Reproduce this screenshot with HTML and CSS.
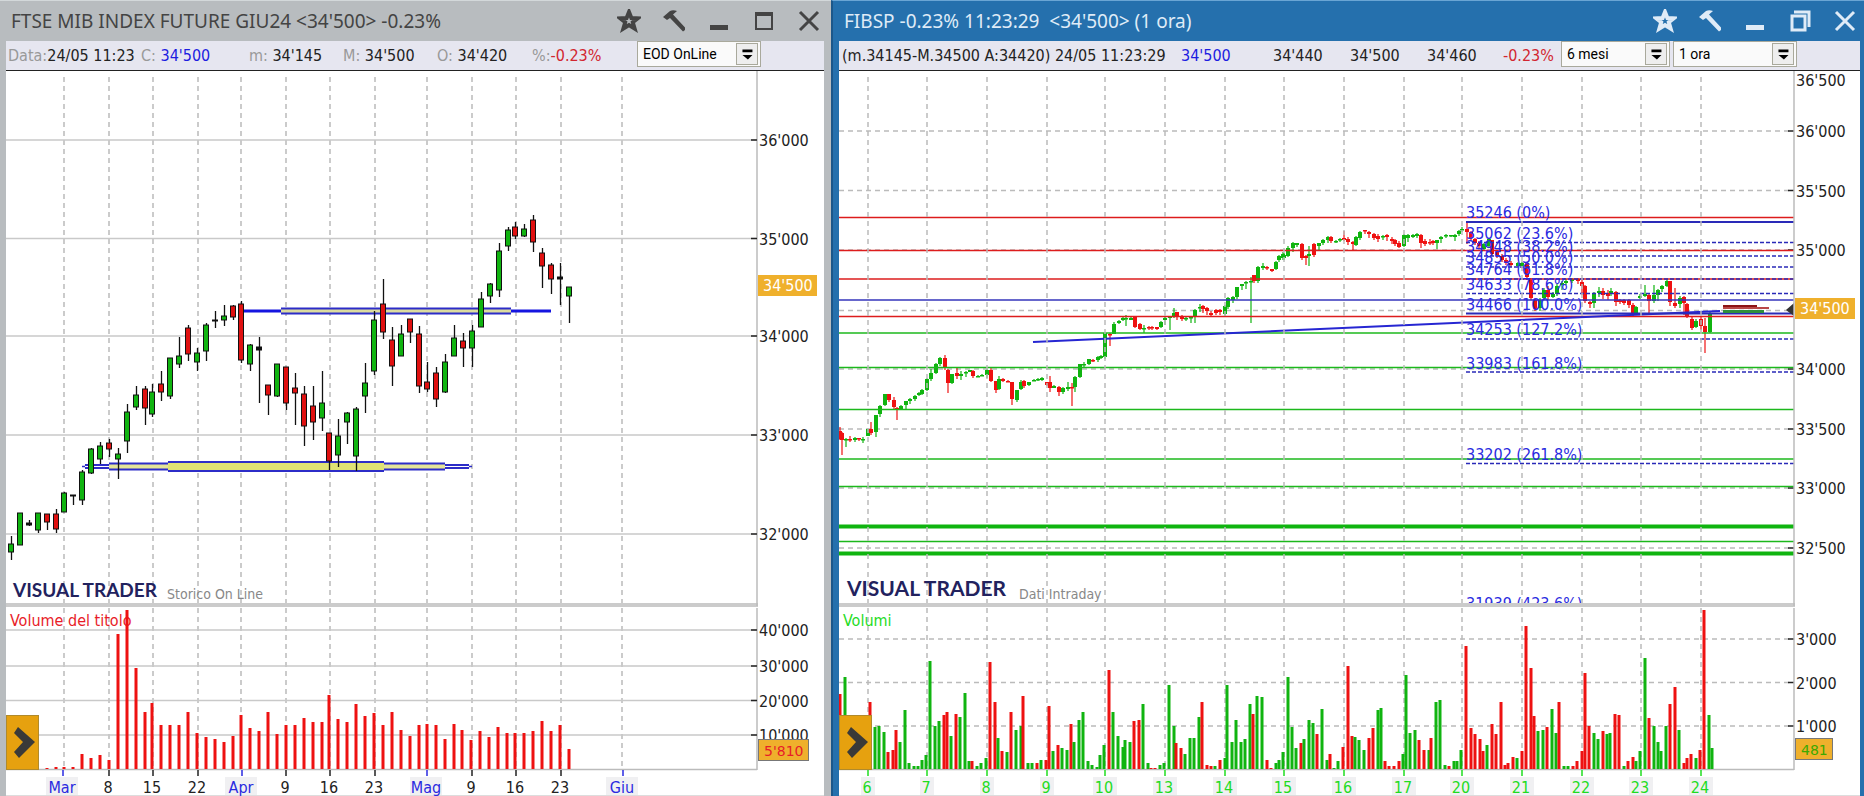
FILE: index.html
```html
<!doctype html>
<html lang="it">
<head>
<meta charset="utf-8">
<title>Visual Trader</title>
<link rel="stylesheet" href="styles.css">
</head>
<body>
<main class="desk">

<section class="win win-idle">
  <header class="titlebar">
    <h2>FTSE MIB INDEX FUTURE GIU24 &lt;34'500&gt; -0.23%</h2>
    <div class="tools">
      <button type="button" aria-label="Preferiti"><svg viewBox="0 0 24 24"><path class="line star" d="M12 3l2.4 6 6.4.3-5 4 1.8 6.2-5.6-3.5-5.6 3.5 1.8-6.2-5-4 6.400-.3z"/></svg></button>
      <button type="button" aria-label="Strumenti"><svg viewBox="0 0 24 24"><path d="M1 8L8 2q3-1.500 7 0l-4 3.500L23 18.500V21l-2 1.500L8 9l-3 2z"/></svg></button>
      <button type="button" aria-label="Riduci"><svg viewBox="0 0 24 24"><path d="M3 16h18v5H3z"/></svg></button>
      <button type="button" aria-label="Ingrandisci"><svg viewBox="0 0 24 24"><path d="M3 3h18v18H3zM5 7v12h14V7z" fill-rule="evenodd"/></svg></button>
      <button type="button" aria-label="Chiudi"><svg viewBox="0 0 24 24"><path class="line" d="M3 3l18 18M21 3L3 21"/></svg></button>
    </div>
  </header>
  <div class="infobar infobar-eod">
    <span><i>Data:</i>24/05 11:23</span>
    <span><i>C:</i> <b class="last">34'500</b></span>
    <span><i>m:</i> 34'145</span>
    <span><i>M:</i> 34'500</span>
    <span><i>O:</i> 34'420</span>
    <span><i>%:</i><b class="down">-0.23%</b></span>
    <label class="combo">
      <select aria-label="Sorgente"><option>EOD OnLine</option></select>
      <svg viewBox="0 0 22 22"><path d="M6 6h11v3H6zM6 12h11l-5 5z"/></svg>
    </label>
  </div>
  <div class="chart">
    <svg id="daily" viewBox="6 71 818 725"></svg>
    <button type="button" class="expand" aria-label="Espandi"><svg viewBox="0 0 33 55"><path d="M12 12l17 15-16 16-5-6 9-10-9-9z"/></svg></button>
  </div>
</section>

<section class="win win-active">
  <header class="titlebar">
    <h2>FIBSP -0.23% 11:23:29 &nbsp;&lt;34'500&gt; (1 ora)</h2>
    <div class="tools">
      <button type="button" aria-label="Preferiti"><svg viewBox="0 0 24 24"><path class="line star" d="M12 3l2.4 6 6.4.3-5 4 1.8 6.2-5.6-3.5-5.6 3.5 1.8-6.2-5-4 6.400-.3z"/></svg></button>
      <button type="button" aria-label="Strumenti"><svg viewBox="0 0 24 24"><path d="M1 8L8 2q3-1.500 7 0l-4 3.500L23 18.500V21l-2 1.500L8 9l-3 2z"/></svg></button>
      <button type="button" aria-label="Riduci"><svg viewBox="0 0 24 24"><path d="M3 16h18v5H3z"/></svg></button>
      <button type="button" aria-label="Ripristina"><svg viewBox="0 0 24 24"><path class="line" d="M4 7h13v14H4zM6 3h15v15"/></svg></button>
      <button type="button" aria-label="Chiudi"><svg viewBox="0 0 24 24"><path class="line" d="M3 3l18 18M21 3L3 21"/></svg></button>
    </div>
  </header>
  <div class="infobar infobar-intraday">
    <span>(m.34145-M.34500 A:34420) 24/05 11:23:29</span>
    <b class="last">34'500</b>
    <span>34'440</span>
    <span>34'500</span>
    <span>34'460</span>
    <b class="down">-0.23%</b>
    <label class="combo">
      <select aria-label="Periodo"><option>6 mesi</option></select>
      <svg viewBox="0 0 22 22"><path d="M6 6h11v3H6zM6 12h11l-5 5z"/></svg>
    </label>
    <label class="combo">
      <select aria-label="Compressione"><option>1 ora</option></select>
      <svg viewBox="0 0 22 22"><path d="M6 6h11v3H6zM6 12h11l-5 5z"/></svg>
    </label>
  </div>
  <div class="chart">
    <svg id="hourly" viewBox="839 71 1021 725"></svg>
    <button type="button" class="expand" aria-label="Espandi"><svg viewBox="0 0 33 55"><path d="M12 12l17 15-16 16-5-6 9-10-9-9z"/></svg></button>
  </div>
</section>

</main>
<script src="chart.js"></script>
</body>
</html>
```
FILE: styles.css
```css
* {
  box-sizing: border-box;
}
body {
  margin: 0;
  background: white;
  font-family: "DejaVu Sans Condensed", "DejaVu Sans", sans-serif;
  font-size: 16px;
  color: #222;
}
button {
  padding: 0;
  border: 0;
  background: none;
}
.desk {
  display: grid;
  grid-template-columns: 831fr 1033fr;
}

/* windows */
.win {
  min-width: 0;
  border-top: 1px solid;
}
.win-idle {
  background: #b8bcbf;
  border-color: #d3d8da;
  padding: 0 7px 0 6px;
  color: #444;
}
.win-active {
  background: #2570ad;
  border-color: #6aa5d4;
  border-left: 2px solid #1c578a;
  padding: 0 4px 0 6px;
  color: #dfebf7;
}
.titlebar {
  display: flex;
  justify-content: space-between;
  align-items: center;
  height: 40px;
  padding: 0 3px 0 5px;
}
.titlebar h2 {
  margin: 0;
  font: 19px "Noto Sans", sans-serif;
  white-space: nowrap;
}
.tools {
  display: flex;
  gap: 21px;
}
.tools svg {
  display: block;
  width: 24px;
  height: 24px;
}
.tools button {
  color: inherit;
}
.tools path {
  fill: currentColor;
}
.tools .line {
  fill: none;
  stroke: currentColor;
  stroke-width: 3;
}
.tools .star {
  stroke-width: 4;
}

/* quote line */
.infobar {
  display: grid;
  height: 30px;
  line-height: 30px;
  background: #e6e6f0;
  border-bottom: 1px solid #222;
  color: #222;
  white-space: nowrap;
}
.infobar-eod {
  grid-template-columns: 133px 108px 94px 94px 95px 105px 124px;
  padding-left: 2px;
}
.infobar-intraday {
  grid-template-columns: 339px 92px 77px 77px 76px 58px 109px 127px;
  padding-left: 3px;
}
.infobar-intraday .combo + .combo {
  margin-left: 3px;
}
.infobar i {
  font-style: normal;
  color: #999;
}
.infobar b {
  font-weight: normal;
}
.infobar .last {
  color: #1c1ce0;
}
.infobar .down {
  color: #d22630;
}
.combo {
  position: relative;
  height: 26px;
}
.combo select {
  display: block;
  width: 100%;
  height: 26px;
  padding: 0 26px 0 5px;
  appearance: none;
  border: 1px solid #a9a99c;
  border-radius: 0;
  background: #fafafa;
  font: 14px Roboto, sans-serif;
  color: #000;
}
.combo svg {
  position: absolute;
  right: 3px;
  top: 2px;
  width: 22px;
  height: 22px;
  border: 1px solid #a9a99c;
  background: #eee;
  pointer-events: none;
}

/* charts */
.chart {
  position: relative;
  background: white;
}
.chart > svg {
  display: block;
  width: 100%;
  height: auto;
}
.expand {
  position: absolute;
  left: 0;
  bottom: 26px;
  width: 33px;
  height: 55px;
  background: #e6a10f;
  border: 1px solid #b08a2c;
}
.expand svg {
  display: block;
  width: 33px;
  height: 55px;
  margin: -1px;
  fill: #3a3a38;
}
.chart text {
  font-size: 16px;
  fill: #222;
}
.chart .mid {
  text-anchor: middle;
}
.chart .brand {
  font: 700 19px Lato, sans-serif;
  fill: #22225e;
}
.chart .brand-big {
  font-size: 21px;
}
.chart .feed {
  font-size: 14px;
  fill: #888;
}
.chart .red {
  fill: #e81c28;
}
.chart .green {
  fill: #1fdc1f;
}
.chart .blue {
  fill: #2a2ae0;
}
.chart .white {
  fill: #fff;
}
.chart .box {
  font-family: "DejaVu Sans", sans-serif;
  font-size: 14px;
}
.chart .vol-up {
  fill: #3ca800;
}
```
FILE: chart.js
```js
var RED = '#ee1111'
var GREEN = '#10b410'
var GRID = '#c9c9c9'
var BAND = '#2c2cc8'

function tag(name, attrs, text){
  var s = '<' + name
  for (var k in attrs) s += ' ' + k + '="' + attrs[k] + '"'
  return s + '>' + (text || '') + '</' + name + '>'
}
function line(x1, y1, x2, y2, color, width, dash){
  var a = {x1: x1, y1: y1, x2: x2, y2: y2, stroke: color, 'stroke-width': width || 1}
  if (dash) a['stroke-dasharray'] = dash
  return tag('line', a)
}
function rect(x, y, w, h, fill, stroke){
  return tag('rect', {x: x, y: y, width: w, height: h, fill: fill, stroke: stroke || 'none'})
}
function band(x1, x2, y, h, fill){
  return rect(x1, y - h / 2, x2 - x1, h, fill) + line(x1, y - h / 2, x2, y - h / 2, BAND, 2) + line(x1, y + h / 2, x2, y + h / 2, BAND, 2)
}
function label(x, y, text, cls){
  return tag('text', {x: x, y: y, 'class': cls || ''}, text)
}
// "a b c;a b c" -> rows
function rows(str){
  return str.trim().split(/\s*;\s*/).map(function(r){ return r.split(' ') })
}

// frame shared by both charts: verticals, pane separator, axes
function frame(left, right, xs){
  var s = ''
  xs.forEach(function(x){ s += line(x, 77, x, 769, '#bbb', 1.5, '5 4') })
  s += rect(left, 603, right - left + 1, 4, '#cbcbcb')
  s += line(right, 71, right, 606, '#bbb', 1.5) + line(right, 608, right, 770, '#bbb', 1.5)
  s += line(left, 769.5, right, 769.5, '#bbb', 1.5)
  s += line(left, 795.5, right + 70, 795.5, '#ddd')
  return s
}
function volumes(str, color){
  return rows(str).map(function(v){
    return rect(v[0] - 1.5, v[1], 3, 769 - v[1], color || (v[2] == 'r' ? RED : GREEN))
  }).join('')
}

/* ---- daily ---- */
// x high low top bottom colour
var dayCandles = `11 536 560 544 552 g;20 513 545 513 545 g;29 520 526 523 525 k;38 513 533 513 530 g;47 514 530 514 522 r;
56 509 533 514 529 r;64 492 512 493 512 g;73 495 505 495 496 k;82 470 505 472 500 g;91 448 474 449 473 g;100 442 464 446 459 g;
109 439 457 443 449 r;118 448 479 454 459 g;127 404 453 412 441 g;136 386 410 395 407 g;145 386 425 389 408 r;152 384 417 392 414 g;
161 371 401 384 392 r;170 358 399 358 396 g;179 337 368 356 364 g;188 325 361 328 354 r;197 348 371 353 362 g;206 323 361 325 351 g;
215 311 328 320 321 k;224 305 326 316 320 g;233 305 320 306 317 r;241 301 363 304 360 r;250 344 371 345 364 g;259 337 403 347 350 k;
268 385 415 385 395 r;277 364 397 364 396 g;286 367 410 367 403 r;295 373 425 388 393 r;304 386 446 394 426 r;313 386 440 406 422 r;
322 371 431 403 418 g;329 433 470 433 461 r;338 419 467 436 455 g;347 412 444 413 422 g;356 407 471 409 456 g;365 363 413 383 396 g;
374 311 375 320 371 g;383 279 339 304 332 r;392 327 386 340 366 r;401 325 356 334 356 g;410 319 343 319 332 r;419 326 393 334 386 r;
427 362 392 382 389 r;436 367 407 373 399 r;445 354 393 362 392 g;454 325 356 338 356 g;463 333 367 341 348 r;472 325 367 331 348 g;
481 292 327 299 327 g;490 283 303 284 296 g;499 243 297 251 290 g;508 227 251 230 246 g;515 222 239 227 236 r;524 224 237 229 236 g;
533 215 252 220 242 r;542 248 288 253 266 r;551 263 294 265 279 r;560 263 305 277 279 k;569 287 323 287 296 g`

var dayVolumes = `47 768;56 767;64 767;73 767;82 754;91 758;100 755;109 760;118 634;127 610;136 668;145 712;152 703;161 725;170 725;
179 725;188 712;197 733;206 737;215 739;224 742;233 736;241 715;250 728;259 731;268 712;277 734;286 725;295 725;304 718;313 722;
322 722;329 695;338 719;347 722;356 704;365 716;374 713;383 725;392 712;401 730;410 736;419 725;427 724;436 725;445 739;454 724;
462 730;471 740;480 731;489 737;498 727;507 733;515 733;524 733;533 731;542 721;551 731;560 725;569 749`

function drawDaily(){
  var s = frame(6, 757, [64, 109, 153, 198, 241, 286, 330, 375, 427, 472, 516, 561, 622])
  rows("140 36'000;238.5 35'000;336 34'000;435 33'000;534 32'000;630 40'000;666 30'000;700.5 20'000;735 10'000").forEach(function(g){
    var y = +g[0]
    s += line(6, y, 757, y, GRID, 1.5) + line(751, y, 757, y, '#222', 1.5)
    s += label(759, y + 6, g[1])
  })
  // resistance and support bands
  s += line(243, 311, 281, 311, '#1515e0', 3) + line(511, 311, 551, 311, '#1515e0', 3)
  s += band(281, 511, 311, 5, '#dcdca0')
  s += line(82, 466.5, 472, 466.5, BAND, 1.5)
  s += band(85, 109, 466.5, 3, '#fff') + band(445, 469, 466.5, 3, '#fff')
  s += band(109, 445, 466.5, 6, '#e4e498')
  s += band(168, 384, 466.5, 9, '#dfe274')
  rows(dayCandles).forEach(function(c){
    var fill = {g: GREEN, r: '#e01010', k: '#111'}[c[5]]
    s += line(+c[0] + .5, c[1], +c[0] + .5, c[2], '#111', 1.3)
    s += rect(c[0] - 2.5, c[3], 5, Math.max(1, c[4] - c[3]), fill, '#111')
  })
  s += label(13, 597, 'VISUAL TRADER', 'brand') + label(167, 599, 'Storico On Line', 'feed')
  s += label(10, 626, 'Volume del titolo', 'red')
  s += volumes(dayVolumes, RED)
  rows('62 Mar m;108 8;152 15;197 22;241 Apr m;285 9;329 16;374 23;426 Mag m;471 9;515 16;560 23;622 Giu m').forEach(function(d){
    var month = d[2] == 'm'
    if (month) s += rect(d[0] - 16, 777, 32, 18, '#f0f0f2')
    s += line(+d[0] + 1, 770, +d[0] + 1, 776, month ? '#2a2ae0' : '#222', 1.5)
    s += label(d[0], 793, d[1], month ? 'mid blue' : 'mid')
  })
  s += rect(758, 275, 59, 21, '#efb02c') + label(763, 291, "34'500", 'white')
  s += rect(758.5, 739.5, 50, 21, '#efb02c', '#777') + label(764, 756, "5'810", 'box red')
  document.getElementById('daily').innerHTML = s
}

/* ---- hourly ---- */
var hourCandles = `840 427 440 431 439 r;842 432 455 433 440 r;846 438 447 439 440 g;850 436 442 439 440 r;855 437 442 438 440 g;
859 438 441 438 439 r;863 437 443 439 440 g;868 429 436 429 436 g;871 422 435 429 433 r;876 415 437 415 432 g;880 405 417 406 414 g;
885 394 406 394 405 g;889 394 402 394 400 r;894 397 409 400 407 r;897 407 420 408 409 r;901 405 410 406 409 g;906 401 409 401 405 g;
910 398 404 399 401 g;915 395 401 396 399 g;919 392 396 393 395 g;922 389 395 390 394 g;927 378 391 379 390 g;931 369 381 373 379 g;
936 363 374 364 373 g;940 357 366 358 364 g;945 355 370 358 368 r;948 369 393 370 383 r;952 374 384 374 383 g;957 368 379 373 376 r;
961 371 380 374 376 g;966 371 377 372 373 g;970 370 372 370 372 g;973 370 378 371 376 r;978 375 377 376 377 g;982 374 376 375 376 g;
987 369 378 370 375 g;991 368 382 370 381 r;996 381 393 381 390 r;999 376 390 379 389 g;1003 378 382 379 381 r;1008 380 382 381 382 r;
1012 382 405 382 399 r;1017 390 402 390 400 g;1021 380 390 382 389 g;1024 380 388 381 386 r;1029 382 386 382 385 g;1034 379 381 380 381 g;
1038 378 381 379 380 g;1042 377 381 378 380 g;1047 382 386 382 385 r;1050 376 392 382 388 r;1054 385 388 386 388 g;1059 386 396 387 392 r;
1063 387 394 388 392 g;1068 382 391 387 389 g;1072 383 406 387 388 r;1075 376 392 377 387 g;1080 364 378 364 377 g;1084 362 367 364 365 g;
1089 359 365 359 364 g;1093 359 362 360 361 r;1098 356 362 357 360 g;1101 355 359 356 358 g;1105 332 359 333 357 g;1110 333 346 334 335 r;
1114 322 334 324 334 g;1119 320 324 321 323 g;1123 316 321 318 320 g;1126 315 326 318 319 g;1131 317 320 318 320 g;1135 316 328 317 327 r;
1140 323 330 324 329 r;1144 325 333 328 329 g;1149 326 330 327 328 r;1152 326 330 327 328 r;1157 327 330 327 329 r;1161 321 328 322 327 g;
1165 317 325 318 320 g;1170 316 330 316 318 g;1174 308 318 313 317 g;1177 312 320 312 317 r;1182 315 321 316 319 r;1186 316 321 318 319 g;
1191 316 323 317 318 g;1195 309 323 310 317 g;1200 304 312 307 308 g;1203 305 313 306 309 r;1207 307 315 308 311 r;1211 311 316 313 315 r;
1216 309 315 310 313 r;1220 309 315 310 312 r;1225 305 316 306 314 g;1228 297 309 298 307 g;1233 296 303 297 300 g;1237 287 299 287 297 g;
1242 284 290 284 286 g;1246 281 289 282 283 g;1251 277 323 281 282 g;1254 275 283 275 281 r;1258 266 283 267 281 g;1263 263 270 266 268 g;
1267 266 270 267 268 r;1272 269 272 269 271 r;1276 261 270 262 269 g;1279 255 262 256 260 g;1284 253 260 255 258 g;1283 252 260 254 258 g;
1288 246 257 248 256 g;1293 242 252 243 248 g;1297 243 247 243 245 g;1302 243 260 244 258 r;1306 255 265 256 258 r;1309 246 266 254 256 g;
1314 243 257 244 255 r;1319 243 250 243 246 g;1323 239 245 240 243 g;1328 236 243 237 240 g;1331 236 243 237 241 r;1336 240 243 241 242 g;
1340 238 242 239 240 g;1344 231 241 238 240 r;1348 237 245 239 242 r;1353 241 250 242 244 r;1356 236 246 237 245 g;1360 231 240 232 238 g;
1365 230 234 230 231 r;1369 231 238 232 234 r;1374 233 240 234 238 r;1378 234 242 236 239 r;1383 235 240 236 237 g;1387 234 241 235 237 r;
1392 237 244 239 241 r;1395 239 246 240 244 r;1399 241 248 243 247 r;1404 234 247 235 246 g;1408 234 242 235 238 g;1413 234 238 235 237 g;
1417 233 238 234 236 g;1421 234 248 235 243 r;1425 239 246 241 244 r;1430 239 245 242 243 r;1433 240 245 241 243 r;1437 240 249 240 243 g;
1441 236 243 237 239 g;1446 234 238 235 236 g;1451 235 237 235 236 g;1455 234 241 235 237 g;1459 230 236 231 234 g;1462 227 232 229 230 g;
1467 222 244 229 232 r;1471 231 240 232 238 r;1475 238 245 239 243 r;1479 241 248 243 246 r;1484 243 251 244 249 g;1489 239 248 239 246 g;
1492 240 256 240 254 r;1497 250 258 252 255 r;1502 254 262 256 260 r;1506 258 265 260 263 r;1511 261 267 263 265 r;1518 262 267 263 266 g;
1522 262 268 263 266 g;1527 262 280 263 277 r;1531 278 300 280 298 r;1535 298 311 300 309 r;1540 298 311 300 308 g;1544 288 300 290 298 g;
1548 286 300 290 297 r;1553 292 298 294 297 g;1557 284 296 286 294 g;1562 281 290 283 285 g;1566 279 285 281 283 g;1572 278 283 279 281 g;
1578 278 284 279 281 r;1582 279 295 282 286 r;1585 285 303 286 301 r;1590 301 308 302 304 r;1594 292 308 294 303 g;1599 287 297 291 293 g;
1603 288 299 291 295 r;1608 290 300 293 296 r;1611 288 296 291 293 g;1616 291 306 292 302 r;1620 299 304 300 302 r;1624 299 305 300 303 r;
1629 299 308 300 305 r;1633 303 317 305 315 r;1636 306 315 307 314 g;1640 294 299 296 298 g;1645 285 297 294 296 g;1649 293 314 295 301 r;
1654 285 303 295 301 g;1658 289 301 290 295 g;1662 285 292 286 289 g;1667 279 287 281 286 g;1670 281 306 281 302 r;1675 288 308 303 306 r;
1680 296 308 298 304 g;1684 296 315 297 303 r;1687 303 318 304 316 r;1692 317 330 319 328 r;1696 319 328 321 327 g;1701 317 330 319 326 r;
1705 318 353 326 332 r;1710 311 333 313 332 g`

var hourVolumes = `840 694 r;845 677 g;870 702 r;875 727 g;879 726 g;884 732 g;888 752 r;893 750 r;896 730 r;900 742 g;905 710 g;909 763 g;
914 766 g;918 766 g;922 760 g;926 755 g;930 661 g;935 726 g;939 721 g;944 715 r;947 712 r;951 736 g;956 714 r;960 717 g;965 693 g;
969 761 g;972 761 r;977 766 g;981 763 g;986 758 g;990 662 r;995 702 r;998 738 g;1002 751 r;1007 752 g;1011 712 r;1016 730 g;1021 726 g;
1023 696 r;1028 763 g;1032 763 g;1037 763 r;1041 760 g;1046 760 r;1049 706 r;1053 751 g;1058 745 r;1062 748 g;1067 750 g;1071 724 r;
1074 742 g;1079 720 g;1083 712 g;1088 761 g;1092 765 g;1097 767 g;1100 755 g;1104 745 g;1109 670 r;1113 712 g;1118 736 g;1123 747 g;
1125 740 g;1130 742 g;1134 721 r;1139 720 r;1143 704 g;1148 763 g;1151 768 r;1155 768 r;1160 765 g;1164 763 g;1169 685 g;1174 726 g;
1176 743 r;1181 748 r;1185 754 g;1190 738 g;1194 738 g;1199 717 g;1202 702 r;1207 765 r;1211 766 r;1215 766 g;1220 760 r;1225 758 g;
1227 685 g;1232 742 g;1236 720 g;1241 742 g;1245 739 g;1250 704 g;1253 714 r;1257 696 g;1262 697 g;1267 760 r;1271 768 r;1276 763 g;
1279 760 g;1283 752 g;1288 677 g;1292 727 g;1296 748 g;1301 743 r;1304 739 g;1309 720 g;1313 723 g;1317 734 r;1322 709 g;1327 760 g;
1330 754 r;1334 768 g;1338 761 g;1343 747 r;1348 666 r;1352 736 r;1355 737 g;1359 740 g;1364 750 g;1369 738 r;1373 728 r;1378 710 g;
1381 708 g;1385 761 r;1389 766 r;1394 766 r;1399 761 r;1403 754 g;1406 675 g;1410 733 g;1415 730 g;1419 740 r;1424 750 r;1429 750 g;
1431 738 r;1436 702 g;1440 700 g;1445 765 g;1449 766 r;1454 761 g;1457 761 g;1461 750 g;1466 646 r;1471 728 r;1475 734 r;1480 739 r;
1483 751 r;1487 745 g;1492 724 r;1496 734 r;1501 702 r;1505 765 r;1508 763 r;1513 757 r;1517 758 g;1522 751 r;1526 626 r;1531 668 r;
1534 716 r;1538 731 g;1543 730 g;1547 727 r;1552 709 g;1556 733 g;1559 702 r;1564 766 g;1568 766 g;1573 766 r;1577 761 r;1582 751 r;
1585 673 r;1589 726 r;1594 733 g;1598 739 g;1603 731 r;1607 734 g;1610 733 g;1615 714 r;1619 715 r;1624 766 g;1628 761 r;1633 757 r;
1636 761 g;1640 751 g;1645 658 g;1649 718 r;1654 726 g;1658 742 g;1661 751 g;1666 726 g;1670 704 r;1675 687 r;1679 730 g;1684 763 r;
1687 758 r;1691 754 r;1696 758 g;1700 750 r;1704 610 r;1709 715 g;1712 748 g`

function drawHourly(){
  var L = 839, R = 1794
  var days = rows('868 6;927 7;987 8;1047 9;1105 10;1165 13;1225 14;1284 15;1344 16;1404 17;1462 20;1522 21;1582 22;1641 23;1701 24')
  var s = ''
  rows("80 36'500;131 36'000;190.5 35'500;250 35'000;310.5 34'500;369 34'000;429 33'500;488 33'000;548 32'500;639 3'000;682.5 2'000;726 1'000").forEach(function(g){
    var y = +g[0]
    if (y > 100) s += line(L, y, R, y, '#bbb', 1.5, '5 4') + line(1788, y, R, y, '#222', 1.5)
    s += label(1796, y + 6, g[1])
  })
  rows(hourCandles).forEach(function(c){
    var col = c[5] == 'r' ? RED : GREEN
    s += line(+c[0], c[1], +c[0], c[2], col, 1.2)
    s += rect(c[0] - 2, c[3], 4, Math.max(1.5, c[4] - c[3]), col)
  })
  // price levels
  rows('217.5 r;250.5 r;279 r;316.5 r;300 b;333 g;367.5 g;409.5 g;459 g;486.5 g;541.5 g;526.5 G;553.5 G').forEach(function(l){
    var col = {r: '#dd1c1c', b: '#3434bb', g: '#1cb81c', G: '#10b410'}[l[1]]
    s += line(L, l[0], R, l[0], col, l[1] == 'G' ? 4 : 1.5)
  })
  s += line(1033, 342, 1720, 311, '#2626d2', 2)
  // fibonacci: line y, text baseline, price, percent
  rows('222 218 35246 0%;242.5 239 35062 23.6%;256 252 34948 38.2%;267 263 34855 50.0%;279 275 34764 61.8%;293.5 290 34633 78.6%;313.5 310 34466 100.0%;339 335 34253 127.2%;372 369 33983 161.8%;463.5 460 33202 261.8%;620 609 31939 423.6%').forEach(function(f){
    var solid = f[3] == '0%' || f[3] == '100.0%'
    if (f[0] < 603) s += line(1466, f[0], R, f[0], '#2a2ab8', solid ? 2 : 1.5, solid ? '' : '4 2')
    s += label(1466, f[1], f[2] + ' (' + f[3] + ')', 'blue')
  })
  // last trades
  s += rect(1723, 305, 34, 3, '#8c1414') + rect(1723, 307, 46, 2, '#b84848') + rect(1723, 310, 41, 3, '#2f8f3c')
  s += tag('path', {d: 'M1786 310l8-7v13z', fill: '#333'})
  s += rect(L, 603, R - L + 1, 24, '#fff')
  s += frame(L, R, days.map(function(d){ return d[0] }))
  s += label(847, 596, 'VISUAL TRADER', 'brand brand-big') + label(1019, 599, 'Dati Intraday', 'feed')
  s += label(843, 626, 'Volumi', 'green')
  s += volumes(hourVolumes)
  days.forEach(function(d){
    var w = d[1].length * 5 + 1
    s += rect(d[0] - w - 1, 777, w * 2 + 2, 18, '#f0f0f2')
    s += line(d[0], 770, d[0], 776, '#1fdd1f', 1.5) + label(d[0] - 1, 793, d[1], 'mid green')
  })
  s += rect(1795, 298, 60, 21, '#efb02c') + label(1800, 314, "34'500", 'white')
  s += rect(1795.5, 738.5, 37, 21, '#efb02c', '#777') + label(1801, 755, '481', 'box vol-up')
  document.getElementById('hourly').innerHTML = s
}

drawDaily()
drawHourly()
```
